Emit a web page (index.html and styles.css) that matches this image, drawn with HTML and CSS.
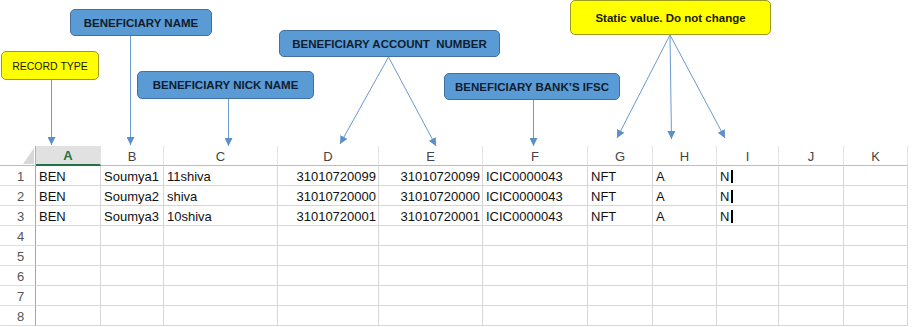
FILE: index.html
```html
<!DOCTYPE html>
<html>
<head>
<meta charset="utf-8">
<link rel="stylesheet" href="styles.css">
</head>
<body>
<div class="page">
  <div class="canvas">
    <svg class="arrows" width="912" height="150" viewBox="0 0 912 150">
      <defs>
        <marker id="ah" markerWidth="8" markerHeight="8" refX="8" refY="4" orient="auto" markerUnits="userSpaceOnUse">
          <path d="M0,0 L8,4 L0,8 z" fill="#5b8fc7"/>
        </marker>
      </defs>
      <line x1="51.5" y1="80" x2="51.5" y2="145" class="ln" marker-end="url(#ah)"/>
      <line x1="130.5" y1="36" x2="130.5" y2="145" class="ln" marker-end="url(#ah)"/>
      <line x1="228.5" y1="99" x2="228.5" y2="146" class="ln" marker-end="url(#ah)"/>
      <line x1="388.5" y1="57" x2="340" y2="144" class="ln" marker-end="url(#ah)"/>
      <line x1="388.5" y1="57" x2="436" y2="146" class="ln" marker-end="url(#ah)"/>
      <line x1="533.5" y1="100" x2="533.5" y2="146" class="ln" marker-end="url(#ah)"/>
      <line x1="670" y1="35" x2="617" y2="138" class="ln" marker-end="url(#ah)"/>
      <line x1="670" y1="35" x2="671.5" y2="139" class="ln" marker-end="url(#ah)"/>
      <line x1="670" y1="35" x2="725" y2="138" class="ln" marker-end="url(#ah)"/>
    </svg>
    <div class="callout yellow c-record">RECORD TYPE</div>
    <div class="callout blue c-name">BENEFICIARY NAME</div>
    <div class="callout blue c-nick">BENEFICIARY NICK NAME</div>
    <div class="callout blue c-acct">BENEFICIARY ACCOUNT  NUMBER</div>
    <div class="callout blue c-ifsc">BENEFICIARY BANK’S IFSC</div>
    <div class="callout yellow c-static">Static value. Do not change</div>
  </div>

  <div class="sheet">
    <div class="row head">
      <div class="cell corner"><span class="tri"></span></div>
      <div class="cell hd sel">A</div>
      <div class="cell hd">B</div>
      <div class="cell hd">C</div>
      <div class="cell hd">D</div>
      <div class="cell hd">E</div>
      <div class="cell hd">F</div>
      <div class="cell hd">G</div>
      <div class="cell hd">H</div>
      <div class="cell hd">I</div>
      <div class="cell hd">J</div>
      <div class="cell hd">K</div>
    </div>
    <div class="row">
      <div class="cell rh">1</div>
      <div class="cell">BEN</div>
      <div class="cell">Soumya1</div>
      <div class="cell">11shiva</div>
      <div class="cell num">31010720099</div>
      <div class="cell num">31010720099</div>
      <div class="cell">ICIC0000043</div>
      <div class="cell">NFT</div>
      <div class="cell">A</div>
      <div class="cell">N<span class="caret"></span></div>
      <div class="cell"></div>
      <div class="cell"></div>
    </div>
    <div class="row">
      <div class="cell rh">2</div>
      <div class="cell">BEN</div>
      <div class="cell">Soumya2</div>
      <div class="cell">shiva</div>
      <div class="cell num">31010720000</div>
      <div class="cell num">31010720000</div>
      <div class="cell">ICIC0000043</div>
      <div class="cell">NFT</div>
      <div class="cell">A</div>
      <div class="cell">N<span class="caret"></span></div>
      <div class="cell"></div>
      <div class="cell"></div>
    </div>
    <div class="row">
      <div class="cell rh">3</div>
      <div class="cell">BEN</div>
      <div class="cell">Soumya3</div>
      <div class="cell">10shiva</div>
      <div class="cell num">31010720001</div>
      <div class="cell num">31010720001</div>
      <div class="cell">ICIC0000043</div>
      <div class="cell">NFT</div>
      <div class="cell">A</div>
      <div class="cell">N<span class="caret"></span></div>
      <div class="cell"></div>
      <div class="cell"></div>
    </div>
    <div class="row">
      <div class="cell rh">4</div>
      <div class="cell"></div><div class="cell"></div><div class="cell"></div><div class="cell"></div><div class="cell"></div><div class="cell"></div><div class="cell"></div><div class="cell"></div><div class="cell"></div><div class="cell"></div><div class="cell"></div>
    </div>
    <div class="row">
      <div class="cell rh">5</div>
      <div class="cell"></div><div class="cell"></div><div class="cell"></div><div class="cell"></div><div class="cell"></div><div class="cell"></div><div class="cell"></div><div class="cell"></div><div class="cell"></div><div class="cell"></div><div class="cell"></div>
    </div>
    <div class="row">
      <div class="cell rh">6</div>
      <div class="cell"></div><div class="cell"></div><div class="cell"></div><div class="cell"></div><div class="cell"></div><div class="cell"></div><div class="cell"></div><div class="cell"></div><div class="cell"></div><div class="cell"></div><div class="cell"></div>
    </div>
    <div class="row">
      <div class="cell rh">7</div>
      <div class="cell"></div><div class="cell"></div><div class="cell"></div><div class="cell"></div><div class="cell"></div><div class="cell"></div><div class="cell"></div><div class="cell"></div><div class="cell"></div><div class="cell"></div><div class="cell"></div>
    </div>
    <div class="row">
      <div class="cell rh">8</div>
      <div class="cell"></div><div class="cell"></div><div class="cell"></div><div class="cell"></div><div class="cell"></div><div class="cell"></div><div class="cell"></div><div class="cell"></div><div class="cell"></div><div class="cell"></div><div class="cell"></div>
    </div>
  </div>
</div>
</body>
</html>
```

FILE: styles.css
```css
* { box-sizing: border-box; margin: 0; padding: 0; }
html, body { background: #ffffff; }
body {
  width: 912px;
  height: 327px;
  overflow: hidden;
  font-family: "Liberation Sans", Arial, sans-serif;
}
.page { width: 912px; }

/* annotation diagram */
.canvas { position: relative; height: 146px; }
.arrows {
  position: absolute;
  left: 0;
  top: 0;
  overflow: visible;
  z-index: 2;
}
.ln { stroke: #6b9bd0; stroke-width: 1; fill: none; }

.callout {
  position: absolute;
  display: flex;
  align-items: center;
  justify-content: center;
  border-radius: 5px;
  font-weight: bold;
  font-size: 11.5px;
  white-space: pre;
  color: #0f1d2e;
}
.blue { background: #5b9bd5; border: 1px solid #41719c; }
.yellow { background: #ffff00; border: 1px solid #9b9b1e; }

.c-record { left: 1px; top: 51px; width: 98px; height: 29px; font-weight: normal; font-size: 10.5px; color: #1a1a00; }
.c-name { left: 70px; top: 9px; width: 142px; height: 27px; }
.c-nick { left: 137px; top: 71px; width: 177px; height: 28px; }
.c-acct { left: 279px; top: 30px; width: 221px; height: 27px; }
.c-ifsc { left: 444px; top: 73px; width: 176px; height: 27px; }
.c-static { left: 570px; top: 0; width: 201px; height: 35px; color: #1a1a00; }

/* spreadsheet */
.sheet { font-size: 13px; color: #111; }
.row {
  display: grid;
  grid-template-columns: 36px 65px 63px 114px 101px 104px 105px 65px 64px 62px 65px 64px;
  height: 20px;
}
.cell {
  display: flex;
  align-items: center;
  padding: 1px 3px 0 3px;
  border-right: 1px solid #d6d6d6;
  border-bottom: 1px solid #d6d6d6;
  white-space: nowrap;
  overflow: hidden;
}
.num { justify-content: flex-end; padding-right: 2px; }

.head .cell { border-bottom-color: #bdbdbd; border-right-color: #e4e4e4; }
.hd { justify-content: center; color: #444; }
.sel {
  background: #e1e1e1;
  color: #217346;
  font-weight: bold;
  border-bottom: 2px solid #217346 !important;
}
.corner {
  justify-content: flex-end;
  align-items: flex-end;
  padding: 0 1px 1px 0;
  border-right-color: #b0b0b0 !important;
}
.tri {
  display: block;
  width: 11px;
  height: 16px;
  background: #d8d8d8;
  clip-path: polygon(100% 0, 100% 100%, 0 100%);
}
.rh {
  justify-content: center;
  padding-left: 9px;
  color: #555;
  border-right-color: #a6a6a6;
  border-bottom-color: #dedede;
}
.caret {
  display: inline-block;
  width: 2px;
  height: 13px;
  margin-left: 2px;
  background: #000;
}
```
